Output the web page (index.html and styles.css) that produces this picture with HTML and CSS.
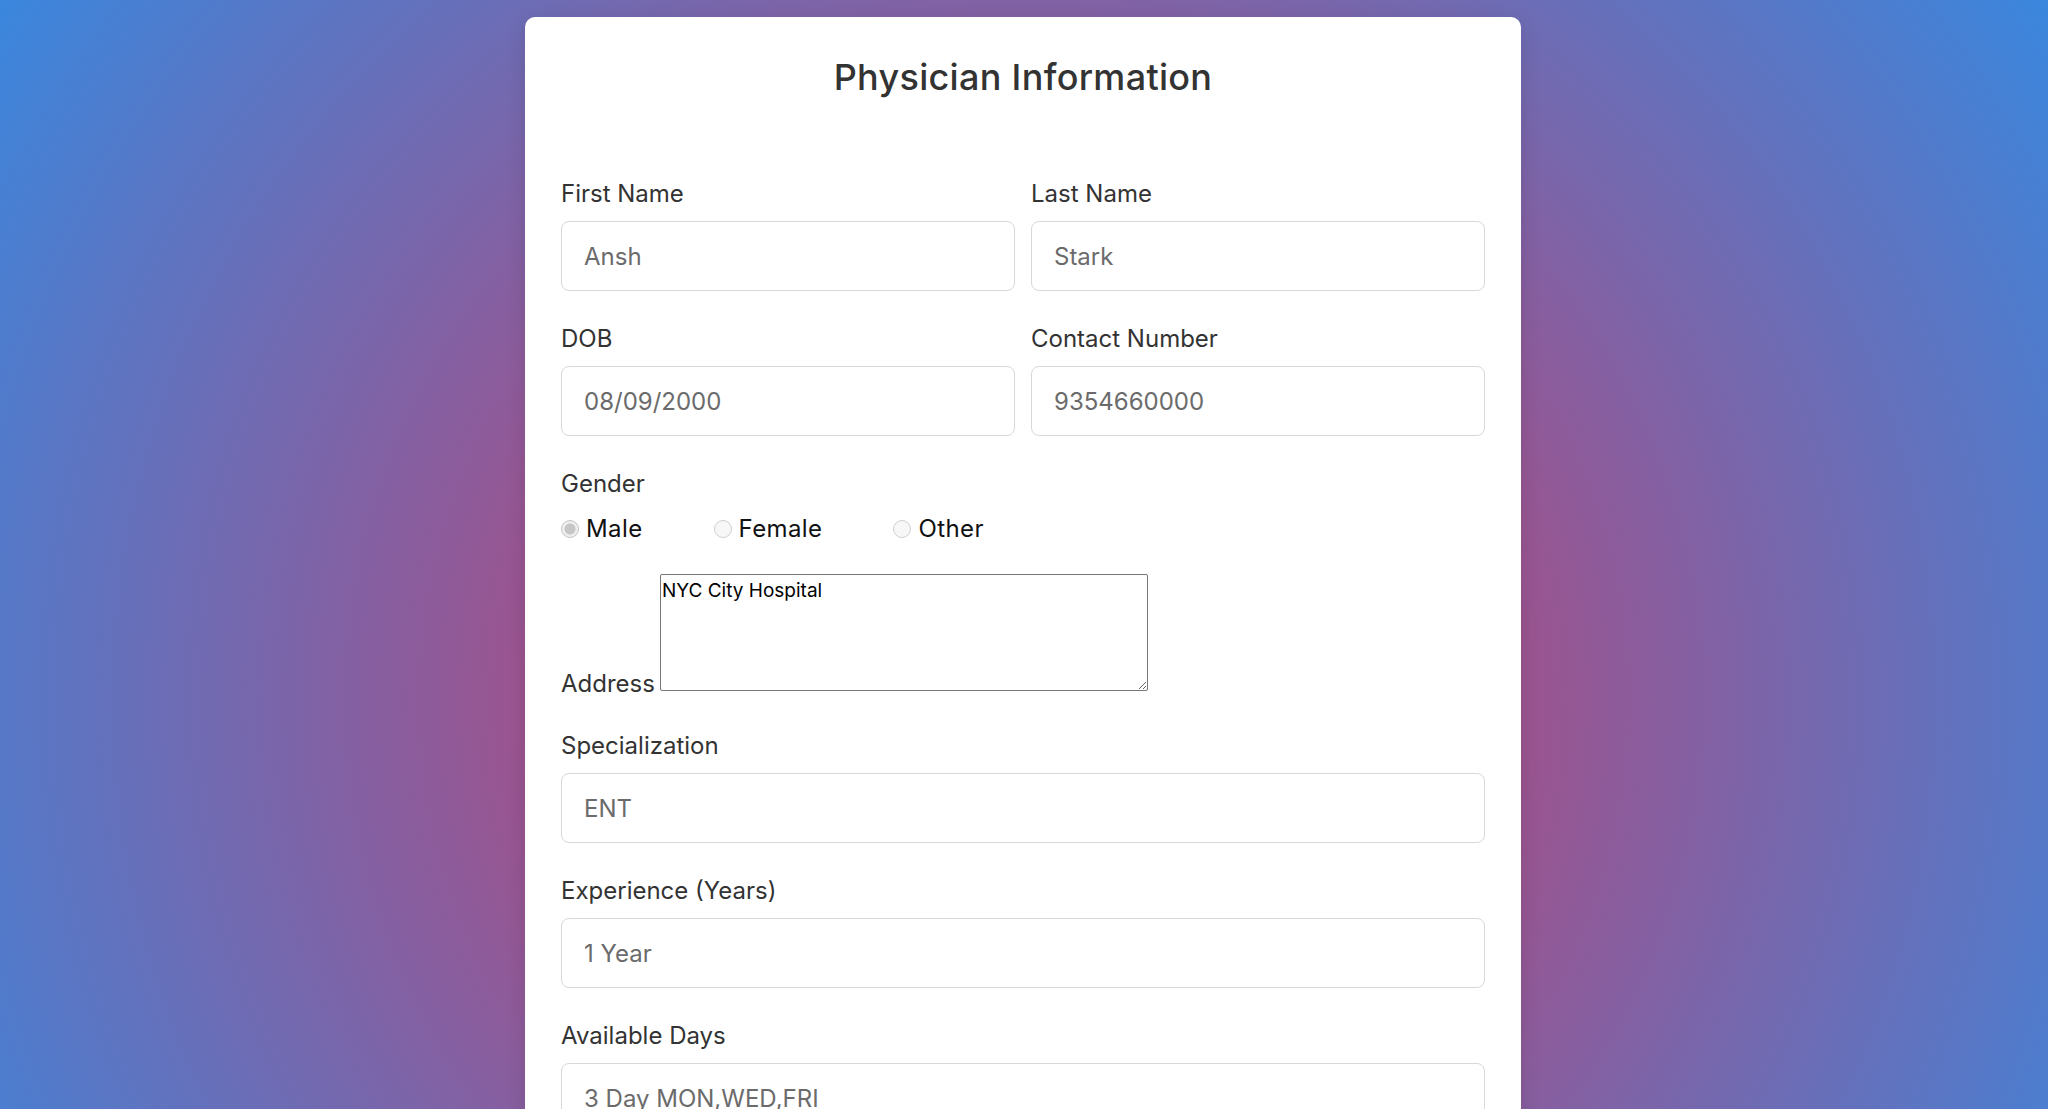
FILE: index.html
```html
<!DOCTYPE html>
<html lang="en">
<head>
<meta charset="utf-8">
<title>Physician Information</title>
<link rel="stylesheet" href="styles.css">
</head>
<body>
<main class="card">
  <h2 class="title">Physician Information</h2>
  <form class="form">
    <div class="row">
      <div class="group">
        <label class="label">First Name</label>
        <input class="field" type="text" value="Ansh" disabled>
      </div>
      <div class="group">
        <label class="label">Last Name</label>
        <input class="field" type="text" value="Stark" disabled>
      </div>
    </div>
    <div class="row">
      <div class="group">
        <label class="label">DOB</label>
        <input class="field" type="text" value="08/09/2000" disabled>
      </div>
      <div class="group">
        <label class="label">Contact Number</label>
        <input class="field" type="text" value="9354660000" disabled>
      </div>
    </div>
    <div class="group">
      <label class="label">Gender</label>
      <div class="radios">
        <label class="option"><input class="radio" type="radio" name="g" checked disabled><span>Male</span></label>
        <label class="option"><input class="radio" type="radio" name="g" disabled><span>Female</span></label>
        <label class="option"><input class="radio" type="radio" name="g" disabled><span>Other</span></label>
      </div>
    </div>
    <div class="address">
      <label class="label-inline">Address</label>
      <textarea class="area" disabled>NYC City Hospital</textarea>
    </div>
    <div class="group">
      <label class="label">Specialization</label>
      <input class="field" type="text" value="ENT" disabled>
    </div>
    <div class="group">
      <label class="label">Experience (Years)</label>
      <input class="field" type="text" value="1 Year" disabled>
    </div>
    <div class="group">
      <label class="label">Available Days</label>
      <input class="field" type="text" value="3 Day MON,WED,FRI" disabled>
    </div>
  </form>
</main>
</body>
</html>
```

FILE: styles.css
```css
* { box-sizing: border-box; }

html {
  background-color: #6a70b8;
  background-image: radial-gradient(circle 1240px at 1024px 700px, #dc325b 0, #3a87de 1240px);
  background-repeat: no-repeat;
  min-height: 100%;
}

body {
  margin: 0;
  padding-right: 2px;
  font-family: "Inter", "Open Sans", sans-serif;
  color: #333;
}

.card {
  width: 996px;
  margin: 17px auto 0;
  background: #fff;
  border-radius: 10px;
  padding: 36px 36px 60px;
  box-shadow: 0 6px 20px rgba(0, 0, 0, 0.12);
}

.title {
  margin: 0 0 73px;
  text-align: center;
  font-size: 36px;
  line-height: 48px;
  font-weight: 500;
  color: #333;
  letter-spacing: 0.3px;
}

.form {
  display: flex;
  flex-direction: column;
}

.row {
  display: flex;
  gap: 16px;
}

.row .group { flex: 1; min-width: 0; }

.group {
  display: flex;
  flex-direction: column;
  margin-bottom: 28px;
}

.label {
  display: block;
  font-size: 24px;
  line-height: 36px;
  padding-top: 2px;
  color: #333;
  margin-bottom: 9px;
}

.field {
  width: 100%;
  height: 70px;
  padding: 0 22px;
  border: 1px solid #d8d8d8;
  border-radius: 8px;
  background: #fff;
  font-family: inherit;
  font-size: 24px;
  color: #6b6b6b;
  -webkit-text-fill-color: #6b6b6b;
  opacity: 1;
}

.radios {
  display: flex;
  align-items: center;
  height: 35px;
  gap: 71px;
}

.option {
  display: flex;
  align-items: center;
  gap: 7px;
  font-size: 24px;
  letter-spacing: 0.4px;
  color: #111;
}

.radio {
  -webkit-appearance: none;
  appearance: none;
  margin: 0;
  width: 18px;
  height: 18px;
  border-radius: 50%;
  border: 1px solid #d0d0d0;
  background: #f7f7f7;
}

.radio:checked {
  border-color: #c4c4c4;
  background: radial-gradient(circle, #c6c6c6 0 5px, #efefef 6px);
}

.address {
  display: flex;
  align-items: flex-end;
  gap: 5px;
  margin-bottom: 35px;
}

.label-inline {
  font-size: 24px;
  line-height: 24px;
  color: #333;
  position: relative;
  top: 5px;
}

.area {
  width: 488px;
  height: 117px;
  margin: 0;
  padding: 2px 1px;
  border: 1px solid #767676;
  border-radius: 2px;
  background: #fff;
  font-family: inherit;
  font-size: 19px;
  line-height: 27px;
  color: #000;
  -webkit-text-fill-color: #000;
  resize: both;
}
```
